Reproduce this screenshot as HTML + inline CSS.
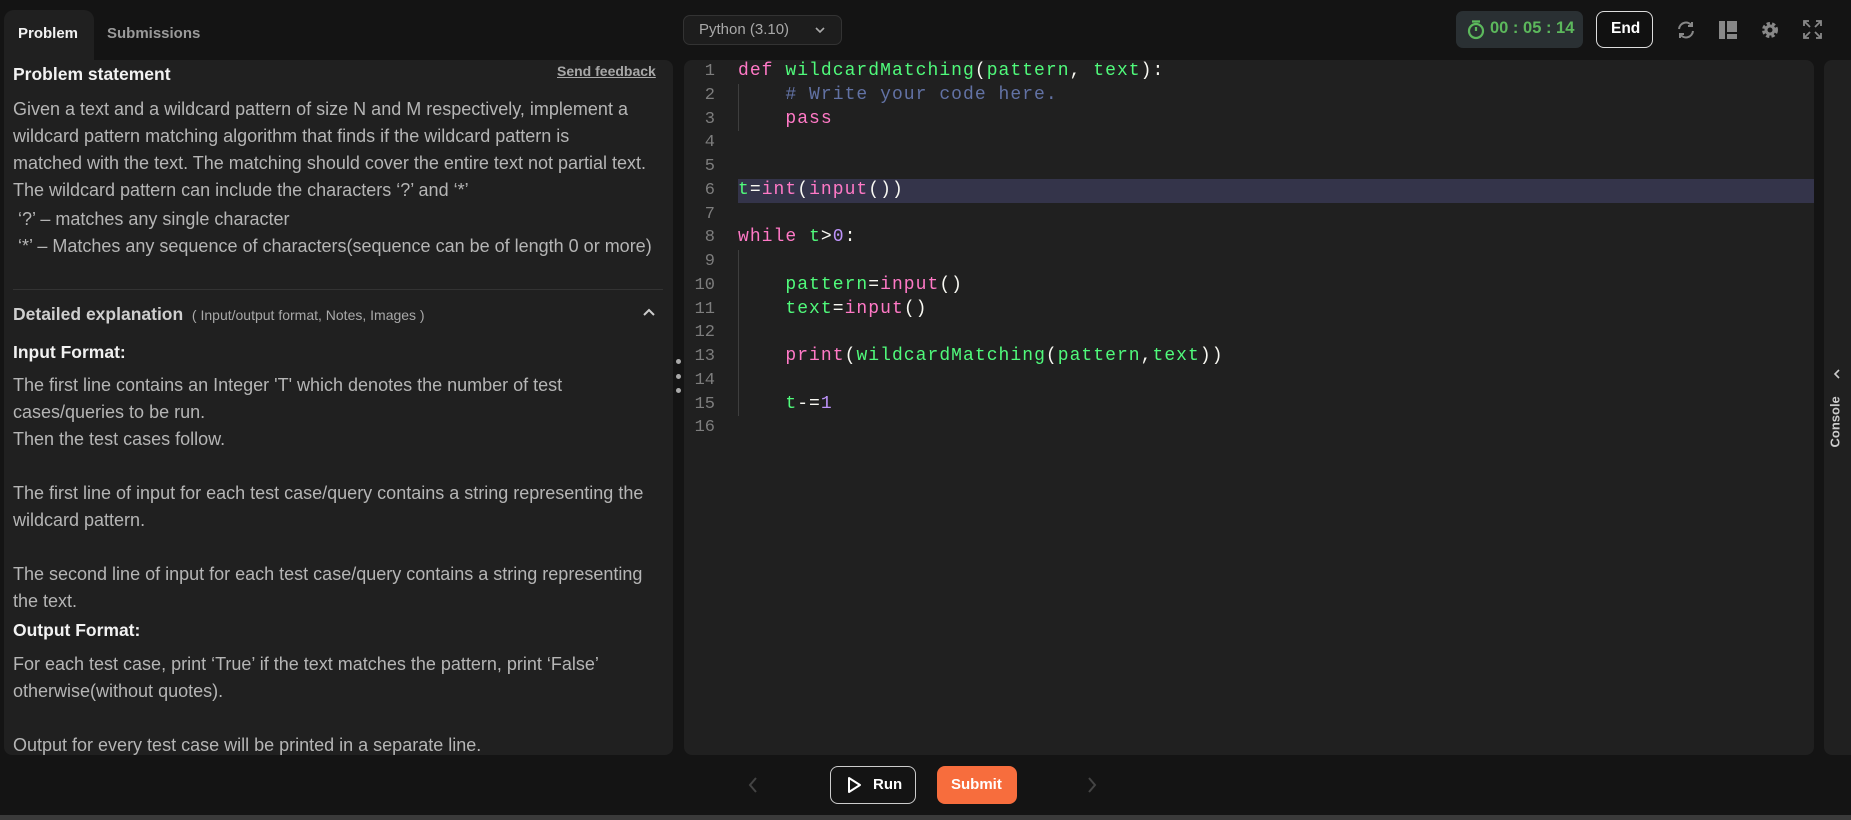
<!DOCTYPE html>
<html><head><meta charset="utf-8"><style>
*{margin:0;padding:0;box-sizing:border-box}
body{width:1851px;height:820px;background:#141414;position:relative;overflow:hidden;font-family:"Liberation Sans",sans-serif;color:#c9c9c9}
.a{position:absolute;white-space:nowrap}
.panel{position:absolute;background:#202020;border-radius:8px}
.t{font-size:18px;color:#b5b5b5;line-height:27px}
.h{font-weight:bold;color:#f2f2f2;font-size:17.5px}
.code{font-family:"Liberation Mono",monospace;font-size:18px;letter-spacing:1.04px;color:#f8f8f2;white-space:pre}
.ln{font-family:"Liberation Mono",monospace;font-size:17px;color:#7d7d7d;width:60px;text-align:right;left:655px}
.k{color:#ff79c6}.g{color:#50fa7b}.c{color:#6272a4}.n{color:#bd93f9}
</style></head><body>
<div class="a" style="left:4px;top:10px;width:90px;height:52px;background:#202020;border-radius:10px 10px 0 0"></div>
<div class="a h" style="left:18px;top:25px;font-size:15px">Problem</div>
<div class="a" style="left:107px;top:25px;font-size:15px;color:#9a9a9a;font-weight:bold">Submissions</div>
<div class="a" style="left:683px;top:15px;width:159px;height:30px;border:1px solid #333;border-radius:7px;background:#1d1d1d"></div>
<div class="a" style="left:699px;top:21px;font-size:15px;color:#a8a8a8">Python (3.10)</div>
<svg class="a" style="left:814px;top:25px" width="12" height="10"><path d="M2 3l4 4 4-4" stroke="#aaa" stroke-width="1.6" fill="none"/></svg>
<div class="a" style="left:1456px;top:11px;width:127px;height:37px;background:#2a3033;border-radius:7px"></div>
<svg class="a" style="left:1466px;top:19px" width="20" height="22"><circle cx="10" cy="12" r="7" stroke="#5cb85c" stroke-width="2.2" fill="none"/><path d="M6 2.5h8M10 12V8" stroke="#5cb85c" stroke-width="2.2"/></svg>
<div class="a" style="left:1490px;top:19px;font-size:16.5px;color:#5cb85c;font-weight:bold">00 : 05 : 14</div>
<div class="a" style="left:1596px;top:11px;width:57px;height:37px;border:1.5px solid #ddd;border-radius:8px;background:#111"></div>
<div class="a" style="left:1611px;top:20px;font-size:15.5px;color:#fff;font-weight:bold">End</div>
<svg class="a" style="left:1675px;top:19px" width="22" height="22" viewBox="0 0 22 22"><path d="M4 10a7 7 0 0 1 13-3M18 12a7 7 0 0 1-13 3" stroke="#888" stroke-width="2" fill="none"/><path d="M17 3v4h-4M5 19v-4h4" stroke="#888" stroke-width="2" fill="none"/></svg>
<svg class="a" style="left:1719px;top:21px" width="18" height="18"><rect x="0" y="0" width="6" height="18" fill="#888"/><rect x="8" y="0" width="10" height="11" fill="#888"/><rect x="8" y="13" width="10" height="5" fill="#888"/></svg>
<svg class="a" style="left:1760px;top:20px" width="20" height="20" viewBox="0 0 20 20"><circle cx="10" cy="10" r="6" fill="none" stroke="#888" stroke-width="4" stroke-dasharray="3 2"/><circle cx="10" cy="10" r="5.5" fill="#888"/><circle cx="10" cy="10" r="2.5" fill="#141414"/></svg>
<svg class="a" style="left:1803px;top:20px" width="19" height="19" viewBox="0 0 19 19"><path d="M1 6V1h5M13 1h5v5M18 13v5h-5M6 18H1v-5M2 2l5 5M17 2l-5 5M17 17l-5-5M2 17l5-5" stroke="#888" stroke-width="1.8" fill="none"/></svg>
<div class="panel" style="left:4px;top:60px;width:669px;height:695px;border-radius:0 8px 8px 8px"></div>
<div class="a h" style="left:13px;top:64px">Problem statement</div>
<div class="a" style="left:557px;top:63px;font-size:14px;color:#a8a8a8;text-decoration:underline;font-weight:bold">Send feedback</div>
<div class="a t" style="left:13px;top:96px">Given a text and a wildcard pattern of size N and M respectively, implement a<br>wildcard pattern matching algorithm that finds if the wildcard pattern is<br>matched with the text. The matching should cover the entire text not partial text.<br>The wildcard pattern can include the characters ‘?’ and ‘*’</div>
<div class="a t" style="left:18px;top:206px">‘?’ – matches any single character<br>‘*’ – Matches any sequence of characters(sequence can be of length 0 or more)</div>
<div class="a" style="left:13px;top:289px;width:650px;height:1px;background:#333"></div>
<div class="a h" style="left:13px;top:304px;color:#cfcfcf">Detailed explanation <span style="font-weight:normal;font-size:14px;color:#a8a8a8">&nbsp;( Input/output format, Notes, Images )</span></div>
<svg class="a" style="left:642px;top:307px" width="14" height="10"><path d="M2 8l5-5 5 5" stroke="#ccc" stroke-width="2" fill="none"/></svg>
<div class="a h" style="left:13px;top:342px">Input Format:</div>
<div class="a t" style="left:13px;top:372px">The first line contains an Integer 'T' which denotes the number of test<br>cases/queries to be run.<br>Then the test cases follow.<br><br>The first line of input for each test case/query contains a string representing the<br>wildcard pattern.<br><br>The second line of input for each test case/query contains a string representing<br>the text.</div>
<div class="a h" style="left:13px;top:620px">Output Format:</div>
<div class="a t" style="left:13px;top:651px">For each test case, print ‘True’ if the text matches the pattern, print ‘False’<br>otherwise(without quotes).<br><br>Output for every test case will be printed in a separate line.</div>
<div class="a" style="left:0;top:755px;width:680px;height:10px;background:#141414"></div>
<div class="a" style="left:676px;top:359px;width:5px;height:5px;border-radius:50%;background:#aaa"></div>
<div class="a" style="left:676px;top:374px;width:5px;height:5px;border-radius:50%;background:#aaa"></div>
<div class="a" style="left:676px;top:388px;width:5px;height:5px;border-radius:50%;background:#aaa"></div>
<div class="panel" style="left:684px;top:60px;width:1130px;height:695px"></div>
<div class="a" style="left:738px;top:179px;width:1076px;height:24px;background:#34344a"></div>
<div class="a" style="left:738px;top:84px;width:1px;height:47px;background:#3e3e3e"></div>
<div class="a" style="left:738px;top:250px;width:1px;height:166px;background:#3e3e3e"></div>
<div class="a ln" style="top:60px;line-height:23.75px">1<br>2<br>3<br>4<br>5<br>6<br>7<br>8<br>9<br>10<br>11<br>12<br>13<br>14<br>15<br>16</div>
<div class="a code" style="left:738px;top:60px;line-height:23.75px"><span class="k">def</span> <span class="g">wildcardMatching</span>(<span class="g">pattern</span>, <span class="g">text</span>):
    <span class="c"># Write your code here.</span>
    <span class="k">pass</span>


<span class="g">t</span>=<span class="k">int</span>(<span class="k">input</span>())

<span class="k">while</span> <span class="g">t</span>&gt;<span class="n">0</span>:

    <span class="g">pattern</span>=<span class="k">input</span>()
    <span class="g">text</span>=<span class="k">input</span>()

    <span class="k">print</span>(<span class="g">wildcardMatching</span>(<span class="g">pattern</span>,<span class="g">text</span>))

    <span class="g">t</span>-=<span class="n">1</span>
</div>
<div class="panel" style="left:1824px;top:60px;width:40px;height:695px"></div>
<svg class="a" style="left:1832px;top:368px" width="10" height="12"><path d="M7 2l-4 4 4 4" stroke="#ccc" stroke-width="1.6" fill="none"/></svg>
<div class="a" style="left:1810px;width:50px;transform:rotate(-90deg);transform-origin:center;font-size:13px;font-weight:bold;color:#ccc;top:415px;text-align:center">Console</div>
<svg class="a" style="left:747px;top:776px" width="12" height="18"><path d="M9 2l-6 7 6 7" stroke="#444" stroke-width="2" fill="none"/></svg>
<div class="a" style="left:830px;top:766px;width:86px;height:38px;border:1.5px solid #ccc;border-radius:8px"></div>
<svg class="a" style="left:846px;top:776px" width="16" height="18"><path d="M3 2l11 7-11 7z" stroke="#fff" stroke-width="2" fill="none" stroke-linejoin="round"/></svg>
<div class="a" style="left:873px;top:776px;font-size:15px;font-weight:bold;color:#fff">Run</div>
<div class="a" style="left:937px;top:766px;width:80px;height:38px;background:#f76d3d;border-radius:8px"></div>
<div class="a" style="left:951px;top:776px;font-size:15px;font-weight:bold;color:#fff">Submit</div>
<svg class="a" style="left:1086px;top:776px" width="12" height="18"><path d="M3 2l6 7-6 7" stroke="#444" stroke-width="2" fill="none"/></svg>
<div class="a" style="left:0;top:815px;width:1851px;height:5px;background:#3a3a3a"></div>
</body></html>
